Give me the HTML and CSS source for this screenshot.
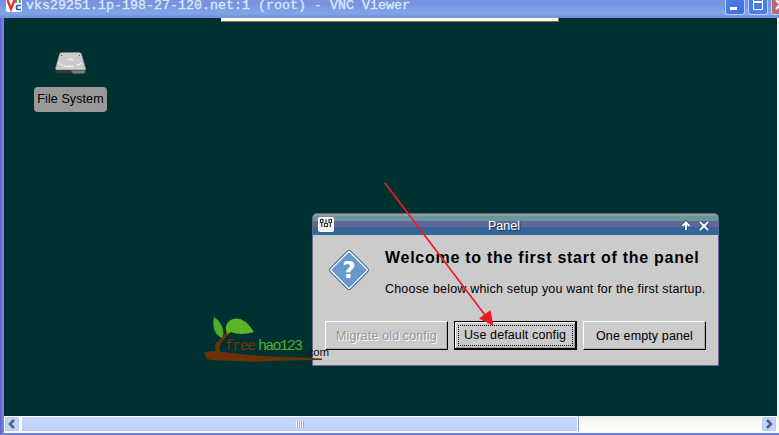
FILE: index.html
```html
<!DOCTYPE html>
<html lang="en">
<head>
<meta charset="utf-8">
<title>VNC Viewer</title>
<link rel="stylesheet" href="styles.css">
</head>
<body>
<div class="viewer">
  <header class="titlebar">
    <svg class="logo" width="16" height="12" viewBox="0 0 16 12"><path d="M0 0H16V10Q16 12 14 12H2Q0 12 0 10Z" fill="#fff"/><path d="M1.500 0L5 9L8.500 0" fill="none" stroke="#e8303a" stroke-width="2.400"/><path d="M10 3V0M14 3V0" stroke="#16a53c" stroke-width="1.600"/><path d="M15 5.500H12Q10.500 5.500 10.500 7.500T12 9.500H15" fill="none" stroke="#1e52cf" stroke-width="1.700"/></svg>
    <div class="title">vks29251.ip-198-27-120.net:1 (root) - VNC Viewer</div>
    <div class="controls">
      <div class="ctl min"><svg width="18" height="14"><rect x="4" y="7" width="7" height="3" fill="#fff"/></svg></div>
      <div class="ctl max"><svg width="18" height="14"><path d="M4.500 0V9.500H13.500V0" fill="none" stroke="#fff"/><rect x="4" y="1" width="10" height="2" fill="#fff"/></svg></div>
      <div class="ctl close"><svg width="18" height="14"><path d="M4 0l9 9M13 0l-9 9" stroke="#fff" stroke-width="2"/></svg></div>
    </div>
  </header>
  <main class="desktop">
    <div class="tab"></div>
    <div class="disk">
      <svg width="34" height="26" viewBox="0 0 34 26">
        <path d="M5 9L1 18V21Q1 22.500 3 22.500H30Q32 22.500 32 21V18L28 9Z" fill="#383838"/>
        <path d="M7.500 1.500H25Q27 1.500 27.500 3L31.500 17.500H1.500L5.500 3Q6 1.500 7.500 1.500Z" fill="#cbcbcb" stroke="#888" stroke-width=".7"/>
        <path d="M4 11Q7 15 14 15.500L20 15M14 9Q17 7 19 9M23 14.500L28 12" fill="none" stroke="#f7f7ec" stroke-width="1.200"/>
        <path d="M2 18H31.500" stroke="#fff" stroke-width="1.200"/>
        <path d="M17 19.500H31V21.500L29 22.500H19Z" fill="#748078"/>
        <path d="M7 4.500h1M25 4.500h1" stroke="#555"/>
      </svg>
      <div class="disk-label"><span>File System</span></div>
    </div>
    <section class="dialog">
      <div class="dlg-title">
        <svg class="dlg-icon" width="16" height="15" viewBox="0 0 16 15"><rect x=".5" y=".5" width="15" height="14" rx="1" fill="#eee" stroke="#fff"/><path d="M2.500 2.500v3h2.500v-3zM3.700 6v4M6.500 9.500h3v-3h-3zM8 2.500v4M11 2.500h2.500v3h-2.500zM12.300 6v4" fill="none" stroke="#333" stroke-width="1.100"/></svg>
        <span class="dlg-name">Panel</span>
        <svg class="dlg-ctl" width="32" height="14" viewBox="0 0 32 14"><g fill="none" stroke="#234" stroke-width="4" opacity=".55"><path d="M6 11V4M2.500 7L6 3.500L9.500 7M20 3L28 11M28 3L20 11"/></g><g fill="none" stroke="#fff" stroke-width="2"><path d="M6 11V4M2.500 7L6 3.500L9.500 7"/><path d="M20 3L28 11M28 3L20 11"/></g></svg>
      </div>
      <div class="dlg-body">
        <div class="message">
          <svg width="44" height="44" viewBox="0 0 44 44"><rect x="7.500" y="7.500" width="29" height="29" rx="3" transform="rotate(45 22 22)" fill="#fff" stroke="#36699c" stroke-width="1"/><rect x="9.300" y="9.300" width="25.400" height="25.400" rx="1.500" transform="rotate(45 22 22)" fill="#6699cc"/><text x="22" y="30" text-anchor="middle" class="q">?</text></svg>
          <div class="copy">
            <h1><span>Welcome to the first start of the panel</span></h1>
            <p><span>Choose below which setup you want for the first startup.</span></p>
          </div>
        </div>
        <div class="buttons">
          <div class="btn disabled"><span>Migrate old config</span></div>
          <div class="btn focus"><span>Use default config</span></div>
          <div class="btn"><span>One empty panel</span></div>
        </div>
      </div>
    </section>
    <svg class="watermark" width="130" height="52" viewBox="0 0 130 52">
      <path d="M1 39.500Q5 38 12 38Q10 33 12 30L19 23L24 17.500L27 19.500Q21 24 17 30Q15 34 16 38.500Q40 42 70 43.500L118 45.500V47Q75 47 52 49L7 47Q0 46 1 39.500Z" fill="#6b3208"/>
      <path d="M10 4Q19 10 19.500 20L18 25Q7 20 10 4Z" fill="#4caf27"/>
      <path d="M23 21Q19 10 29 6Q40 3 50 19Q36 23 27 19Z" fill="#58b525"/>
      <g class="hand"><text x="21" y="37" textLength="31" fill="#713509">free</text><text x="54" y="37" textLength="45" fill="#52ad27">hao123</text></g>
      <text x="101" y="43" textLength="24" class="com">.com</text>
    </svg>
    <svg class="arrow" width="114" height="150" viewBox="0 0 114 150"><path d="M1 2L104 138" stroke="#ed1c24" stroke-width="1.700"/><path d="M109.500 145L95 137.500L106.500 129Z" fill="#ed1c24"/></svg>
  </main>
  <footer class="scroll">
    <div class="sbtn"><svg width="15" height="15"><path d="M9 3L5 7L9 11" fill="none" stroke="#4d6185" stroke-width="2.500"/></svg></div>
    <div class="thumb"><i class="grip"></i></div>
    <div class="track"></div>
    <div class="sbtn"><svg width="15" height="15"><path d="M5 3L9 7L5 11" fill="none" stroke="#4d6185" stroke-width="2.500"/></svg></div>
  </footer>
</div>
</body>
</html>
```

FILE: styles.css
```css
* { box-sizing: border-box; }
body { margin: 0; overflow: hidden; font-family: "Liberation Sans", sans-serif; }
svg { display: block; }
.viewer { width: 779px; height: 435px; display: flex; flex-direction: column; background: linear-gradient(90deg, #5a62cc 0 1px, #6f79d8 1px 3px, #7a87de 3px 4px, transparent 4px), #707fdb; }
.titlebar { height: 18px; flex: none; display: flex; padding-left: 6px; background: linear-gradient(#7894de 0 5px, #7d9fe4 9px, #80a5e8 14px, #7894df 16px, #7992dc); overflow: hidden; }
.title { margin-left: 4px; font: 13.333px/11px "Liberation Mono", monospace; color: #dce7fc; white-space: pre; -webkit-text-stroke: .35px #dce7fc; }
.controls { margin-left: auto; display: flex; gap: 3px; margin-right: -12px; }
.ctl { width: 20px; height: 15px; border: 1px solid #bccdf7; border-top: 0; border-radius: 0 0 3px 3px; background: linear-gradient(135deg, #527de9, #3f6de1); }
.ctl.max { background: #4b7ae9; }
.ctl.close { background: #b9687c; }
.desktop { position: relative; height: 398px; flex: none; margin-left: 4px; background: #003131; border-right: 2px solid #f4f6fc; }
.tab { width: 338px; height: 4px; margin-left: 217px; background: #ffffdf; border: solid #77776d; border-width: 0 1px 1px; border-left-color: #eee; }
.disk { position: absolute; left: 30px; top: 33px; width: 73px; display: flex; flex-direction: column; align-items: center; }
.disk-label { margin-top: 10px; width: 73px; height: 25px; border-radius: 4px; background: #999; color: #000; font-size: 12.500px; line-height: 25px; text-align: center; white-space: nowrap; }
.disk-label span { letter-spacing: .1px; }
.dialog { position: absolute; left: 308px; top: 195px; width: 407px; height: 153px; border: 1px solid #666699; border-radius: 5px 5px 0 0; background: #cbcbcb; overflow: hidden; display: flex; flex-direction: column; }
.dlg-title { height: 21px; display: flex; align-items: center; background: linear-gradient(#999 0 2px, #669999 2px 7px, #666699 7px 13px, #336699 13px); padding: 0 6px 0 5px; }
.dlg-name { flex: 1; text-align: center; padding-right: 6px; color: #fff; font-size: 12.500px; line-height: 22px; padding-top: 3px; text-shadow: 1px 1px #234; }
.dlg-ctl { margin-top: 2px; }
.dlg-body { flex: 1; padding: 13px 12px 15px; display: flex; flex-direction: column; justify-content: space-between; }
.message { display: flex; padding-left: 2px; gap: 14px; white-space: nowrap; }
.q { font: bold 23px "DejaVu Sans", sans-serif; fill: #fff; }
h1, p { margin: 0; }
h1 { font-size: 16px; line-height: 20px; letter-spacing: .73px; }
p { margin-top: 12px; font-size: 12.500px; line-height: 18px; letter-spacing: .19px; }
.buttons { display: flex; gap: 6px; }
.btn { width: 123px; height: 29px; border: 1px solid #000; border-top-color: #fff; border-left-color: #fff; box-shadow: inset -1px -1px #aaa; display: flex; align-items: center; justify-content: center; font-size: 12.500px; letter-spacing: .12px; white-space: nowrap; }
.disabled { color: #969696; text-shadow: 1px 1px #fff; }
.focus { border: solid #000; border-width: 1px 2px 2px 1px; box-shadow: inset 1px 1px #fff, inset -1px -1px #999; position: relative; }
.focus::after { content: ""; position: absolute; inset: 3px 2px 2px 3px; border: 1px dotted #000; }
.watermark { position: absolute; left: 200px; top: 295px; }
.hand { font: 15px "Liberation Mono", monospace; stroke-width: .3px; }
.com { font-size: 11.500px; fill: #111; }
.arrow { position: absolute; left: 380px; top: 163px; }
.scroll { height: 17px; flex: none; margin-left: 4px; display: flex; background: linear-gradient(#edece5, #f5f4ef 3px, #fefefc 14px); }
.sbtn { width: 16px; height: 16px; border: 1px solid #fff; border-radius: 2px; background: #c4d3fc; box-shadow: inset 0 0 0 1px #b5c8f5; }
.sbtn svg { width: 14px; }
.thumb { width: 558px; height: 16px; border: 1px solid #fff; border-left-width: 2px; border-radius: 2px; background: linear-gradient(#c8d6fb, #c2d3fd 11px, #b6c9f5); box-shadow: 1px 0 #849fd8; display: flex; align-items: center; justify-content: center; }
.grip { width: 8px; height: 7px; background: repeating-linear-gradient(90deg, #eef4fe 0 1px, #8cb0f8 1px 2px); }
.track { width: 183px; }
```
